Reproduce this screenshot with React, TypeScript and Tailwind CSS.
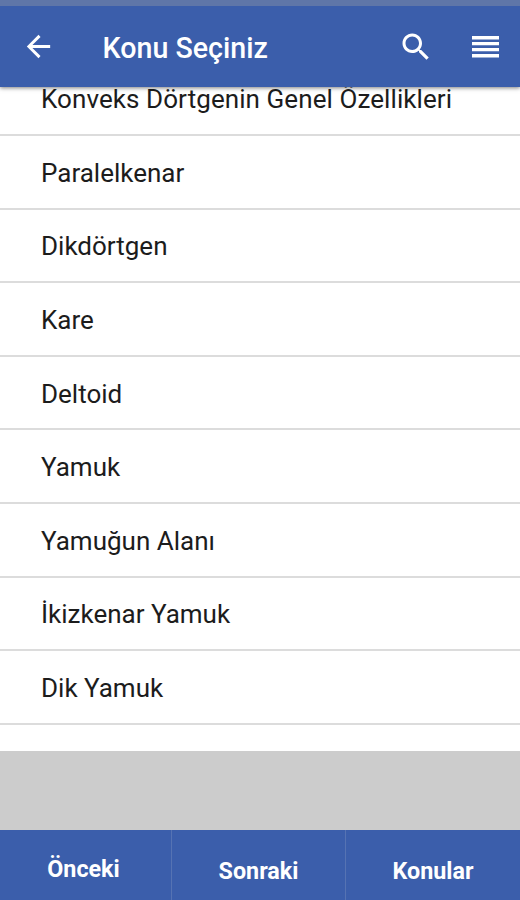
const topics = [
  "Paralelkenar",
  "Dikdörtgen",
  "Kare",
  "Deltoid",
  "Yamuk",
  "Yamuğun Alanı",
  "İkizkenar Yamuk",
  "Dik Yamuk",
];

function Header() {
  return (
    <header className="relative z-10 h-[87px] shrink-0 bg-[#3b5eab] text-white shadow-[0_1px_4px_rgba(0,0,0,0.5)]">
      <div className="h-[6px] bg-[#5f76a8]" />
      <div className="flex h-[81px] items-center pl-[21px] pr-[14px]">
        <button type="button" aria-label="Geri" className="size-[35px]">
          <svg viewBox="0 0 24 24" fill="currentColor" className="size-full">
            <path d="M20 11H7.83l5.59-5.59L12 4l-8 8 8 8 1.41-1.41L7.83 13H20v-2z" />
          </svg>
        </button>
        <h1 className="ml-[46.6px] mt-[2px] text-[28.6px] leading-8 font-medium">Konu Seçiniz</h1>
        <button type="button" aria-label="Ara" className="ml-auto size-[36px]">
          <svg viewBox="0 0 24 24" fill="currentColor" className="size-full">
            <path d="M15.5 14h-.79l-.28-.27C15.41 12.59 16 11.11 16 9.5 16 5.91 13.09 3 9.5 3S3 5.91 3 9.5 5.91 16 9.5 16c1.61 0 3.09-.59 4.23-1.57l.27.28v.79l5 4.99L20.49 19l-4.99-5zm-6 0C7.01 14 5 11.99 5 9.5S7.01 5 9.5 5 14 7.01 14 9.5 11.99 14 9.5 14z" />
          </svg>
        </button>
        <button type="button" aria-label="Menü" className="ml-[31px] size-[41px]">
          <svg viewBox="0 0 41 41" fill="currentColor" className="size-full">
            <path d="M7 9.9h27v3.6H7zM7 16.1h27v3.2H7zM7 22h27v3.2H7zM7 27.9h27v3.6H7z" />
          </svg>
        </button>
      </div>
    </header>
  );
}

export default function App() {
  return (
    <div className="flex h-[900px] w-[520px] flex-col overflow-hidden bg-white font-[Roboto,sans-serif]">
      <Header />
      <ul className="h-[664px] shrink-0 text-[26px] text-[#1c1c1c]">
        {/* Scrolled partly under the header */}
        <li className="flex h-[49px] items-start border-b-2 border-[#dcdcdc] pl-[41px]">
          <span className="-mt-[4px] leading-8 tracking-[0.08px] whitespace-nowrap">Konveks Dörtgenin Genel Özellikleri</span>
        </li>
        {topics.map((topic) => (
          <li key={topic} className="flex h-[73.6px] items-center border-b-2 border-[#dcdcdc] pt-[2px] pl-[41px]">
            <span className="leading-8">{topic}</span>
          </li>
        ))}
      </ul>
      <div className="h-[79px] shrink-0 bg-[#cccccc]" />
      <nav className="grid h-[70px] shrink-0 grid-cols-[172px_174px_1fr] bg-[#3b5eab] text-[23.3px] font-bold text-white">
        <button type="button" className="border-r border-[#5673b3] pr-[4px] pt-[8px]">Önceki</button>
        <button type="button" className="border-r border-[#5673b3] pt-[12px]">Sonraki</button>
        <button type="button" className="pt-[12px]">Konular</button>
      </nav>
    </div>
  );
}
